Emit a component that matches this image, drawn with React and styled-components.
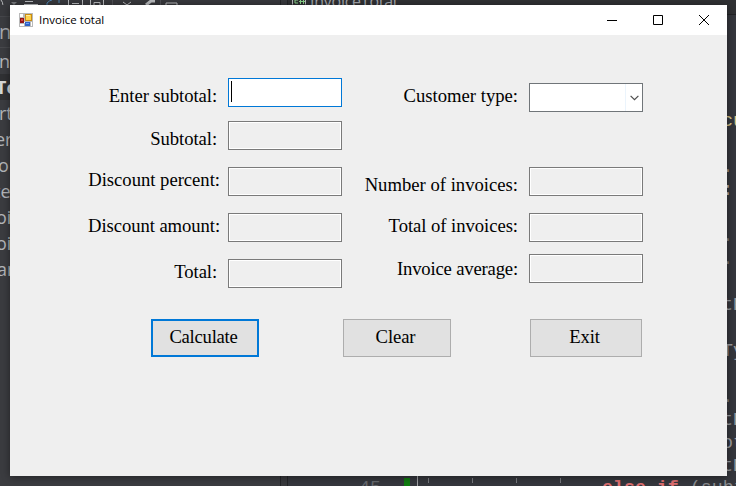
import React from 'react';
import styled, { createGlobalStyle } from 'styled-components';

const GlobalStyle = createGlobalStyle`
  *, *::before, *::after { box-sizing: border-box; }
  body { margin: 0; background: #38393d; overflow: hidden; }
`;

const Desktop = styled.div`
  position: relative;
  width: 736px;
  height: 486px;
  overflow: hidden;
  background: #38393d;
`;

/* ---- code editor behind the dialog ---- */
const Ide = styled.div`
  display: grid;
  grid-template-columns: 281px 7px 448px;
  height: 486px;
`;

const Explorer = styled.div`
  display: flex;
  flex-direction: column;
  overflow: hidden;
  background: #3b3c40;
  border-right: 1px solid #242528;
`;

const IdeStrip = styled.div`
  display: flex;
  height: 17px;
  flex: none;
  background: #38393d;
  border-bottom: 1px solid #45464a;
`;

const TreeTitle = styled.div`
  height: 31px;
  flex: none;
  font: 20px/30px 'Open Sans', sans-serif;
  text-indent: -1px;
  color: #a7a9ad;
  border-bottom: 1px solid #48494d;
`;

const TreeItem = styled.div`
  height: 26px;
  flex: none;
  line-height: 27px;
  font-family: 'Open Sans', sans-serif;
  font-size: 18px;
  font-weight: ${(p) => (p.$bold ? 700 : 400)};
  color: ${(p) => (p.$bold ? '#d8d8d8' : '#b4b6ba')};
  background: ${(p) => (p.$bold ? '#303134' : 'transparent')};
  text-indent: ${(p) => p.$shift}px;
  white-space: nowrap;
`;

const Splitter = styled.div`
  background: #38393d;
  border-right: 1px solid #242528;
`;

const Editor = styled.div`
  display: flex;
  flex-direction: column;
  overflow: hidden;
  background: #35373d;
`;

const FileTab = styled.div`
  display: flex;
  gap: 4px;
  height: 15px;
  flex: none;
  padding-left: 4px;
  background: #303134;
  border-bottom: 1px solid #222326;
  font: 16px/2px 'Open Sans', sans-serif;
  letter-spacing: -0.25px;
  color: #a5a8ae;
`;

const CodeBlock = styled.div`
  display: flex;
  flex-direction: column;
  height: 461px;
  flex: none;
  padding: 95px 0 0 434px;
`;

const CodeLine = styled.div`
  height: 23px;
  flex: none;
  font: 18.3px/23px 'Liberation Mono', monospace;
  color: ${(p) => p.$color || '#9b9da1'};
  white-space: pre;
`;

const LastLine = styled.div`
  display: flex;
  height: 10px;
  font: 18.3px/24px 'Liberation Mono', monospace;
  color: #8b8d91;
  white-space: pre;

  & > * { flex: none; }
`;

const LineNo = styled.span`
  width: 116px;
  padding-left: 71px;
  color: #66696e;
`;

const ChangeMark = styled.span`
  width: 6px;
  height: 9px;
  margin-top: 2px;
  background: #107c10;
`;

const Guides = styled.span`
  width: 185px;
  margin-left: 7px;
  border-left: 1px solid #a0a1a4;
  background: repeating-linear-gradient(90deg, transparent 0 10px, #797b80 10px 11px, transparent 11px 44px) no-repeat 0 2px / 150px 5px;
`;

const Keyword = styled.span`
  color: #dd6e70;
  font-weight: 700;
`;

/* ---- dialog ---- */
const Dialog = styled.section`
  position: absolute;
  left: 10px;
  top: 5px;
  width: 717px;
  height: 471px;
  display: flex;
  flex-direction: column;
  background: #efefef;
  box-shadow: 0 1px 8px rgba(0, 0, 0, 0.45);
`;

const TitleBar = styled.header`
  display: flex;
  align-items: center;
  height: 30px;
  flex: none;
  background: #fff;
  padding-left: 9px;
`;

const Title = styled.h1`
  margin: 0 auto 0 6px;
  font: 11.5px/16px 'Open Sans', sans-serif;
  color: #000;
`;

const CaptionButton = styled.button`
  display: flex;
  align-items: center;
  justify-content: center;
  width: 46px;
  height: 28px;
  padding: 0;
  border: 0;
  background: none;
`;

const Form = styled.form`
  display: flex;
  flex-direction: column;
  flex: 1;
  font-family: 'Liberation Serif', serif;
  font-size: 18.67px;
  color: #000;
`;

const Columns = styled.div`
  display: grid;
  grid-template-columns: 332px 301px;
  height: 284px;
`;

const Column = styled.div`
  display: flex;
  flex-direction: column;
  padding-top: ${(p) => p.$top}px;
`;

const FieldRow = styled.label`
  display: flex;
  justify-content: flex-end;
  height: 29px;
  flex: none;
  margin-bottom: ${(p) => p.$after || 0}px;
`;

const Caption = styled.span`
  line-height: 22px;
  padding-top: ${(p) => p.$drop}px;
  margin-right: ${(p) => p.$gap || 11}px;
  letter-spacing: ${(p) => p.$tracking || 0}px;
  white-space: nowrap;
`;

const Box = styled.span`
  display: flex;
  width: 114px;
  height: 29px;
  border: 1px solid ${(p) => (p.$focused ? '#0078d7' : '#7a7a7a')};
  background: ${(p) => (p.$focused ? '#fff' : '#efefef')};
  box-shadow: inset 0 0 0 1px #fff;
`;

const Caret = styled.span`
  width: 1px;
  height: 21px;
  margin: 2px 0 0 2px;
  background: #000;
`;

const Select = styled(Box)`
  justify-content: flex-end;
  background: #fff;
  border-color: #707579;
`;

const Arrow = styled.span`
  display: flex;
  align-items: center;
  justify-content: center;
  width: 17px;
  border-left: 1px solid #ebf4fc;
`;

const Actions = styled.div`
  display: flex;
  padding-left: 141px;
`;

const PushButton = styled.button`
  width: ${(p) => p.$width}px;
  height: 38px;
  margin-right: ${(p) => p.$after || 0}px;
  padding: 0 3px 2px 0;
  border: ${(p) => (p.$primary ? '2px solid #0078d7' : '1px solid #adadad')};
  background: #e1e1e1;
  font: inherit;
  letter-spacing: ${(p) => (p.$primary ? '-0.25px' : '-0.1px')};
  color: inherit;
`;

const tree = [
  ['nv', -1], ['To', -4, true], ['rt', -1], ['er', -5], ['o', -2],
  ['te', -6], ['oi', -4], ['oi', -4], ['ar', -3],
];

const code = [
  ['cu', '#d8c48a'], [''], ['.', '#aaa08f'], [':', '#c5c5c5'], [''],
  ['..', '#85878a'], ['..', '#85878a'], [''], ['tP'], [''],
  ['Ty'], [''], ['.', '#85878a'], ['tP'], ['ot'], ['tP'],
];

const leftFields = [
  { label: 'Enter subtotal:', drop: 7, after: 14, focused: true, tracking: -0.07 },
  { label: 'Subtotal:', drop: 7, after: 17, tracking: -0.07 },
  { label: 'Discount percent:', drop: 2, gap: 8, after: 17, tracking: -0.02 },
  { label: 'Discount amount:', drop: 2, gap: 8, after: 17, tracking: -0.08 },
  { label: 'Total:', drop: 2, tracking: -0.1 },
];

const rightFields = [
  { label: 'Customer type:', drop: 2, after: 55, select: true },
  { label: 'Number of invoices:', drop: 7, after: 17 },
  { label: 'Total of invoices:', drop: 2, after: 12, tracking: -0.05 },
  { label: 'Invoice average:', drop: 4, tracking: -0.17 },
];

function AppIcon() {
  return (
    <svg width="14" height="14" viewBox="0 0 14 14" shapeRendering="crispEdges">
      <path fill="#b9b9b9" d="M0 0h14v14H0z" />
      <path fill="#fff" d="M1 1h3v3H1zM1 11h4v2H1zM12 9h1v4h-1zM5 9h1v1H5z" />
      <path fill="#c98d12" d="M6 1h7v7H6z" />
      <path fill="#ffd34d" d="M7 2h5v5H7z" />
      <path fill="#ffec9b" d="M7 2h4v1H7z" />
      <path fill="#961414" d="M1 5h4v5H1z" />
      <path fill="#d44242" d="M2 6h2v2H2z" />
      <path fill="#2f62c8" d="M6 9h5v4H6z" />
      <path fill="#6da1ee" d="M7 10h3v1H7z" />
    </svg>
  );
}

function ToolbarIcons() {
  return (
    <svg width="280" height="5" fill="none" stroke="#b9bbbe">
      <path d="M0 8Q5 5 1 0M25 1.500h8M24 4.500h14M68.500 0v6M82.500 0v6M72 3.500h7M90.500 0v6M103.500 0v6M94 5v-2.500h6v2.500M123 2l4 3 4-3M166 5v-2h11v2" />
      <path d="M146 5l5-4h4" strokeWidth="3" />
      <path d="M47 5v-2q3-3 5-3M59 3v-3" stroke="#4f86b5" />
      <path d="M11 2h6l-3 3z" fill="#77797d" stroke="none" />
      <path d="M112.500 0v5M160.500 0v5" stroke="#505156" />
    </svg>
  );
}

function SourceFileIcon() {
  return (
    <svg width="14" height="5" fill="none">
      <path d="M.5 0v4.500M13.500 0v4.500" stroke="#b9bbbe" />
      <path d="M6 0H3v3h3M8.500 0v4M11.500 0v4M7 1.500h6" stroke="#8bd48b" />
    </svg>
  );
}

function Field({ label, drop, gap, after, focused, select, tracking }) {
  return (
    <FieldRow $after={after}>
      <Caption $drop={drop} $gap={gap} $tracking={tracking}>{label}</Caption>
      {select ? (
        <Select>
          <Arrow>
            <svg width="9" height="6" viewBox="0 0 9 6" fill="none" stroke="#4d4d4d" strokeWidth="1.2">
              <path d="M.6.800 4.500 4.700 8.400.800" />
            </svg>
          </Arrow>
        </Select>
      ) : (
        <Box $focused={focused}>{focused && <Caret />}</Box>
      )}
    </FieldRow>
  );
}

export default function App() {
  return (
    <Desktop>
      <GlobalStyle />
      <Ide aria-hidden="true">
        <Explorer>
          <IdeStrip><ToolbarIcons /></IdeStrip>
          <TreeTitle>n</TreeTitle>
          {tree.map(([text, shift, bold], i) => (
            <TreeItem key={i} $shift={shift} $bold={bold}>{text}</TreeItem>
          ))}
        </Explorer>
        <Splitter />
        <Editor>
          <FileTab><SourceFileIcon />InvoiceTotal</FileTab>
          <CodeBlock>
            {code.map(([text, color], i) => (
              <CodeLine key={i} $color={color}>{text}</CodeLine>
            ))}
          </CodeBlock>
          <LastLine>
            <LineNo>45</LineNo>
            <ChangeMark />
            <Guides />
            <span><Keyword>else if</Keyword> (subt</span>
          </LastLine>
        </Editor>
      </Ide>

      <Dialog>
        <TitleBar>
          <AppIcon />
          <Title>Invoice total</Title>
          <CaptionButton aria-label="Minimize">
            <svg width="10" height="10" stroke="#000"><path d="M0 5.500h10" /></svg>
          </CaptionButton>
          <CaptionButton aria-label="Maximize">
            <svg width="10" height="10" stroke="#000" fill="none"><path d="M.5.500h9v9h-9z" /></svg>
          </CaptionButton>
          <CaptionButton aria-label="Close">
            <svg width="10" height="10" stroke="#000"><path d="M0 0l10 10M10 0L0 10" /></svg>
          </CaptionButton>
        </TitleBar>
        <Form>
          <Columns>
            <Column $top={43}>
              {leftFields.map((f) => <Field key={f.label} {...f} />)}
            </Column>
            <Column $top={48}>
              {rightFields.map((f) => <Field key={f.label} {...f} />)}
            </Column>
          </Columns>
          <Actions>
            <PushButton type="button" $width={108} $after={84} $primary>Calculate</PushButton>
            <PushButton type="button" $width={108} $after={79}>Clear</PushButton>
            <PushButton type="button" $width={112}>Exit</PushButton>
          </Actions>
        </Form>
      </Dialog>
    </Desktop>
  );
}
